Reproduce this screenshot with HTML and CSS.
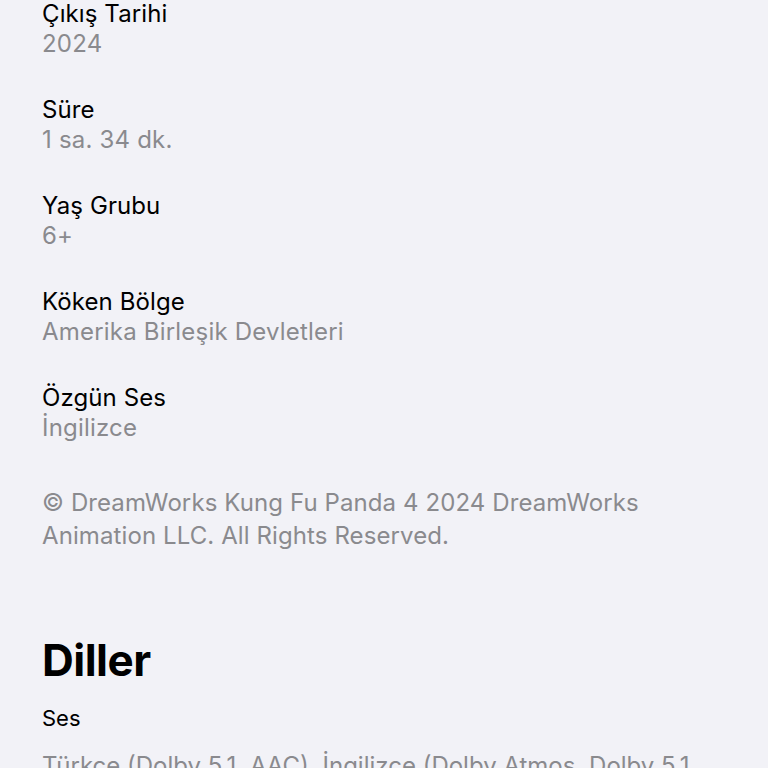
FILE: index.html
```html
<!DOCTYPE html>
<html lang="tr">
<head>
<meta charset="utf-8">
<link rel="stylesheet" href="styles.css">
</head>
<body>
<main class="page">
  <section class="info">
    <div class="item"><div class="label">Çıkış Tarihi</div><div class="value">2024</div></div>
    <div class="item"><div class="label">Süre</div><div class="value">1 sa. 34 dk.</div></div>
    <div class="item"><div class="label">Yaş Grubu</div><div class="value">6+</div></div>
    <div class="item"><div class="label">Köken Bölge</div><div class="value">Amerika Birleşik Devletleri</div></div>
    <div class="item"><div class="label">Özgün Ses</div><div class="value">İngilizce</div></div>
  </section>
  <p class="copyright">© DreamWorks Kung Fu Panda 4 2024 DreamWorks Animation LLC. All Rights Reserved.</p>
  <section class="langs">
    <h2 class="heading">Diller</h2>
    <div class="sublabel">Ses</div>
    <div class="subvalue">Türkçe (Dolby 5.1, AAC), İngilizce (Dolby Atmos, Dolby 5.1, AAC)</div>
  </section>
</main>
</body>
</html>
```
FILE: styles.css
```css
html, body {
  margin: 0;
  padding: 0;
  background: #f2f2f7;
  height: 768px;
  overflow: hidden;
}
.page {
  padding: 0 40px 0 42px;
  font-family: Inter, "Noto Sans", sans-serif;
  margin-top: -1px;
}
.info {
  display: flex;
  flex-direction: column;
  gap: 36px;
}
.label {
  font-size: 24px;
  line-height: 30px;
  letter-spacing: 0.1px;
  color: #000;
}
.value {
  font-size: 24px;
  line-height: 30px;
  letter-spacing: 0.2px;
  color: #8a8a8e;
}
.copyright {
  margin: 43px 0 0;
  font-size: 24px;
  line-height: 33px;
  letter-spacing: 0.1px;
  color: #8a8a8e;
  max-width: 640px;
}
.langs {
  margin-top: 83px;
}
.heading {
  margin: 0;
  font-size: 44px;
  font-weight: 700;
  line-height: 50px;
  color: #000;
  letter-spacing: -0.5px;
}
.sublabel {
  margin-top: 18px;
  font-size: 22px;
  line-height: 30px;
  color: #000;
}
.subvalue {
  margin-top: 16px;
  font-size: 24px;
  line-height: 33px;
  color: #8a8a8e;
  max-width: 680px;
}
```
